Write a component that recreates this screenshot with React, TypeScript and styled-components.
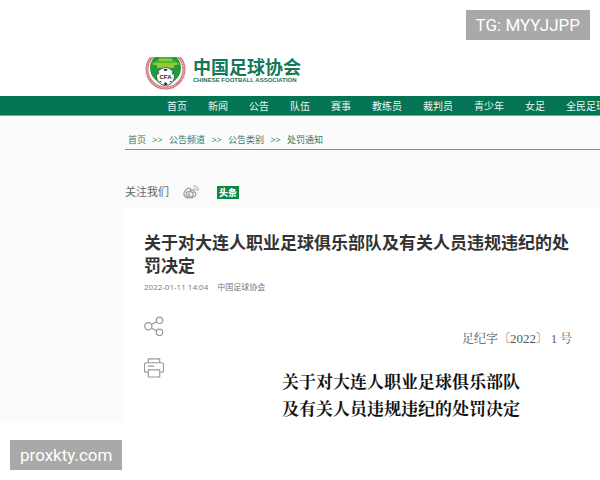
import React from "react";
import styled, { createGlobalStyle } from "styled-components";

const Global = createGlobalStyle`
  * { box-sizing: border-box; }
  body {
    margin: 0;
    background: #fff;
    overflow-x: hidden;
    font-family: "Open Sans", "Noto Sans CJK SC", sans-serif;
  }
  h1, h2, p, ol, ul { margin: 0; padding: 0; list-style: none; }
  a { color: inherit; text-decoration: none; }
`;

const Page = styled.div`
  position: relative;
  padding-top: 57px;
  padding-bottom: 58px;
  overflow: hidden;
`;

const Header = styled.header`
  display: flex;
  height: 39px;
  padding-left: 145px;
  gap: 7px;
`;

const Brand = styled.div`
  display: flex;
  flex-direction: column;
  color: #14765a;
  white-space: nowrap;
`;

const BrandName = styled.span`
  font: 700 18px/19px "Noto Sans CJK SC", sans-serif;
`;

const BrandSub = styled.span`
  font: 700 6px/8px "Liberation Sans", sans-serif;
`;

const Nav = styled.nav`
  display: flex;
  gap: 21px;
  height: 20px;
  padding-left: 167px;
  overflow: hidden;
  background: #047455;
  border-bottom: 1px solid #70b27f;
  color: #e9f7f1;
  font-size: 10px;
  line-height: 20px;
  white-space: nowrap;
`;

const Body = styled.main`
  padding-left: 125px;
  background: linear-gradient(#f9fdf3, #fbfbfb 6px);
`;

const Crumbs = styled.ol`
  display: flex;
  gap: 6px;
  height: 34px;
  padding: 16px 0 0 3px;
  border-bottom: 1px solid #64a390;
  color: #35796a;
  font-size: 9px;
  line-height: 16px;
  white-space: nowrap;
`;

const Separator = styled.li`
  width: 11px;
  text-align: center;
`;

const Follow = styled.div`
  display: flex;
  align-items: center;
  height: 58px;
  padding-top: 26px;
  color: #666;
  font-size: 11px;
  line-height: 16px;
`;

const WeiboLink = styled.a`
  display: flex;
  margin-left: 14px;
`;

const Toutiao = styled.a`
  margin-left: 18px;
  width: 22px;
  background: #0b8746;
  color: #fff;
  font-size: 9px;
  font-weight: 900;
  line-height: 13px;
  text-align: center;
`;

const Article = styled.article`
  padding: 23px 19px 0;
  height: 214px;
  background: #fff;
`;

const Title = styled.h1`
  color: #333;
  font-size: 17px;
  font-weight: 700;
  line-height: 23px;
`;

const Meta = styled.p`
  display: flex;
  gap: 9px;
  margin-top: 4px;
  color: #777;
  font-size: 8px;
  line-height: 12px;
`;

const Content = styled.div`
  display: flex;
  margin-top: 23px;
`;

const Tools = styled.div`
  display: flex;
  flex-direction: column;
  gap: 21px;
  width: 20px;
`;

const ToolButton = styled.button`
  display: flex;
  padding: 0;
  border: 0;
  background: none;
`;

const Document = styled.div`
  flex: 1;
  padding: 14px 9px 0 0;
  font-family: "Liberation Serif", "Noto Serif CJK SC", "Noto Sans CJK SC", serif;
`;

const DocNumber = styled.p`
  color: #555;
  font-size: 12px;
  line-height: 18px;
  text-align: right;
`;

const Year = styled.span`
  font-size: 13px;
`;

const DocTitle = styled.h2`
  padding: 21px 0 0 66px;
  color: #111;
  font-size: 17px;
  font-weight: 700;
  line-height: 27px;
  text-align: center;
`;

const Watermark = styled.span<{ $corner: "top" | "bottom" }>`
  position: absolute;
  ${(p) => (p.$corner === "top" ? "top: 10px; right: 10px;" : "bottom: 10px; left: 10px;")}
  padding: 0 10px;
  background: #a9a9a9;
  color: #fff;
  font: 400 17px/30px Roboto, sans-serif;
`;

function Crest() {
  return (
    <svg width="41" height="34" viewBox="0 0 41 34" aria-label="CFA">
      <circle cx="20.5" cy="12.5" r="18.5" fill="#fff" stroke="#d0777d" strokeWidth="3" />
      <circle cx="20.5" cy="12.5" r="18.5" fill="none" stroke="#efc9c9" strokeWidth="1" strokeDasharray="2 1" />
      <circle cx="20.5" cy="11" r="15.5" fill="#219b3e" />
      <path d="M15 0h11l2 3 6 3v2H7V6l6-3z" fill="#55b52c" />
      <path d="M14 3h13M9 7h23" stroke="#d8dd43" strokeWidth="1" />
      <path d="M12 8h17v3H12z" fill="#9bc632" />
      <circle cx="20.5" cy="19.500" r="9" fill="#fff" stroke="#276b3d" strokeWidth="1" />
      <path d="M18.500 12h4l-1 2h-2zM18.500 27l2-2 2 2-1 1h-2zM12.500 15.500l2 0-1.500 2.500zM28.500 15.500l-2 0 1.500 2.500zM14 24l2 0 .5 2zM27 24l-2 0-.5 2z" fill="#333" />
      <text x="20.500" y="21.500" textAnchor="middle" fontFamily="Liberation Sans" fontWeight="700" fontSize="6" fill="#222">CFA</text>
    </svg>
  );
}

function Weibo() {
  return (
    <svg width="16" height="14" viewBox="0 0 16 14" fill="none" stroke="#999">
      <path d="M7 3.300C5 2.500 1 6 .8 8.700.7 11.500 3.500 13 6.800 13c3.600 0 6.200-2 6.200-4 0-1.400-1-2-2-2.200.4-1.500-.3-2.500-3.500-1.300.3-1 .2-1.900-.5-2.200z" strokeWidth="1.200" />
      <ellipse cx="6.600" cy="9.200" rx="3.600" ry="2.600" strokeWidth="1.200" />
      <circle cx="6" cy="9.500" r="1.300" fill="#999" stroke="none" />
      <path d="M10.500 1c3-.6 5.200 1.800 4.300 4.800M10.800 3.200c1.500-.2 2.300.8 2 2.200" strokeWidth="1" />
    </svg>
  );
}

function ShareIcon() {
  return (
    <svg width="20" height="20" viewBox="0 0 20 20" fill="none" stroke="#999" strokeWidth="1.200">
      <circle cx="4.300" cy="10.300" r="3.600" />
      <circle cx="15.500" cy="4.300" r="3.200" />
      <circle cx="15.500" cy="16.300" r="3.200" />
      <path d="M7.500 8.600l5.100-2.900M7.500 12l5.100 2.900" />
    </svg>
  );
}

function PrintIcon() {
  return (
    <svg width="21" height="21" viewBox="0 0 21 21" fill="none" stroke="#999" strokeWidth="1.200">
      <path d="M4.500 5.500v-4h12v4M4.500 15.500h-2c-1.200 0-2-.7-2-2v-6c0-1.300.8-2 2-2h16c1.200 0 2 .7 2 2v6c0 1.300-.8 2-2 2h-2M4.500 13h12v7.500h-12zM4 9h6.500" />
    </svg>
  );
}

const sections = ["首页", "新闻", "公告", "队伍", "赛事", "教练员", "裁判员", "青少年", "女足", "全民足球"];
const trail = ["首页", "公告频道", "公告类别", "处罚通知"];

export default function App() {
  return (
    <>
      <Global />
      <Page>
        <Header>
          <Crest />
          <Brand>
            <BrandName>中国足球协会</BrandName>
            <BrandSub>CHINESE FOOTBALL ASSOCIATION</BrandSub>
          </Brand>
        </Header>
        <Nav>
          {sections.map((s) => (
            <a key={s} href="#">{s}</a>
          ))}
        </Nav>
        <Body>
          <Crumbs>
            {trail.map((t, i) => (
              <React.Fragment key={t}>
                {i > 0 && <Separator>&gt;&gt;</Separator>}
                <li><a href="#">{t}</a></li>
              </React.Fragment>
            ))}
          </Crumbs>
          <Follow>
            <span>关注我们</span>
            <WeiboLink href="#" aria-label="微博"><Weibo /></WeiboLink>
            <Toutiao href="#">头条</Toutiao>
          </Follow>
          <Article>
            <Title>关于对大连人职业足球俱乐部队及有关人员违规违纪的处罚决定</Title>
            <Meta>
              <time>2022-01-11 14:04</time>
              <span>中国足球协会</span>
            </Meta>
            <Content>
              <Tools>
                <ToolButton aria-label="分享"><ShareIcon /></ToolButton>
                <ToolButton aria-label="打印"><PrintIcon /></ToolButton>
              </Tools>
              <Document>
                <DocNumber>足纪字〔<Year>2022</Year>〕 1 号</DocNumber>
                <DocTitle>
                  关于对大连人职业足球俱乐部队
                  <br />
                  及有关人员违规违纪的处罚决定
                </DocTitle>
              </Document>
            </Content>
          </Article>
        </Body>
        <Watermark $corner="top">TG: MYYJJPP</Watermark>
        <Watermark $corner="bottom">proxkty.com</Watermark>
      </Page>
    </>
  );
}
